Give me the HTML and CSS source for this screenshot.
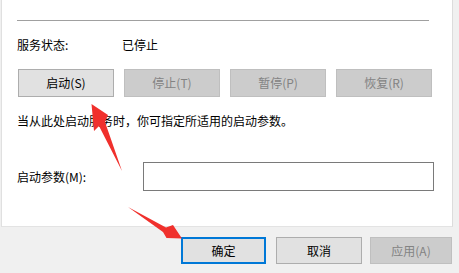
FILE: index.html
```html
<!DOCTYPE html>
<html lang="zh-CN">
<head>
<meta charset="utf-8">
<link rel="stylesheet" href="styles.css">
</head>
<body>
<div class="dialog">
  <div class="panel">
    <div class="sep"></div>
    <div class="status-row">
      <span class="status-label">服务状态:</span>
      <span class="status-value">已停止</span>
    </div>
    <div class="svc-buttons">
      <button class="btn">启动(S)</button>
      <button class="btn disabled">停止(T)</button>
      <button class="btn disabled">暂停(P)</button>
      <button class="btn disabled">恢复(R)</button>
    </div>
    <p class="desc">当从此处启动服务时，你可指定所适用的启动参数。</p>
    <div class="param-row">
      <span class="param-label">启动参数(M):</span>
      <div class="param-input"></div>
    </div>
  </div>
  <div class="footer">
    <button class="btn fbtn ok">确定</button>
    <button class="btn fbtn cancel">取消</button>
    <button class="btn fbtn apply disabled">应用(A)</button>
  </div>
</div>
<svg class="arrows" width="459" height="273" viewBox="0 0 459 273">
  <polygon points="122,171 105,122 108,115 91.5,104 94,131 99,126" fill="#f0302c"/>
  <polygon points="128,207 166,227.5 173,225 182,238.5 166.5,238 163,232" fill="#f0302c"/>
</svg>
</body>
</html>
```

FILE: styles.css
```css
html, body {
  margin: 0;
  padding: 0;
}
body {
  width: 459px;
  height: 273px;
  background: #f0f0f0;
  font-family: "Noto Sans CJK SC", "Noto Sans", sans-serif;
  font-size: 12px;
  color: #000;
  position: relative;
  overflow: hidden;
}
.dialog {
  display: flex;
  flex-direction: column;
}
.panel {
  margin-left: 1px;
  width: 450px;
  height: 226px;
  background: #fff;
  border-left: 1px solid #e0e0e0;
  border-right: 1px solid #dcdcdc;
  border-bottom: 1px solid #e3e3e3;
  box-sizing: content-box;
  display: flex;
  flex-direction: column;
}
.sep {
  margin: 20px 0 0 15px;
  width: 412px;
  height: 1px;
  background: #a0a0a0;
}
.status-row {
  display: flex;
  margin-top: 15px;
  margin-left: 15px;
  height: 18px;
  line-height: 18px;
}
.status-label {
  width: 105px;
}
.svc-buttons {
  display: flex;
  gap: 10px;
  margin-top: 15px;
  margin-left: 16px;
}
.btn {
  font-family: inherit;
  font-size: 12px;
  color: #000;
  background: #e1e1e1;
  border: 1px solid #adadad;
  padding: 0;
  margin: 0;
  width: 96px;
  height: 28px;
  line-height: 26px;
}
.btn.disabled {
  background: #cccccc;
  border-color: #bfbfbf;
  color: #838383;
}
.desc {
  margin: 15px 0 0 15px;
  height: 18px;
  line-height: 18px;
}
.param-row {
  display: flex;
  align-items: center;
  margin-top: 32px;
  margin-left: 15px;
}
.param-label {
  width: 126px;
}
.param-input {
  width: 289px;
  height: 27px;
  border: 1px solid #7a7a7a;
  background: #fff;
}
.footer {
  display: flex;
  margin-top: 10px;
  margin-left: 181px;
}
.fbtn {
  height: 27px;
  line-height: 25px;
}
.ok {
  width: 85px;
  border: 2px solid #0078d7;
  line-height: 23px;
}
.cancel {
  width: 86px;
  margin-left: 10px;
}
.apply {
  width: 82px;
  margin-left: 8px;
}
.arrows {
  position: absolute;
  left: 0;
  top: 0;
  pointer-events: none;
}
```
